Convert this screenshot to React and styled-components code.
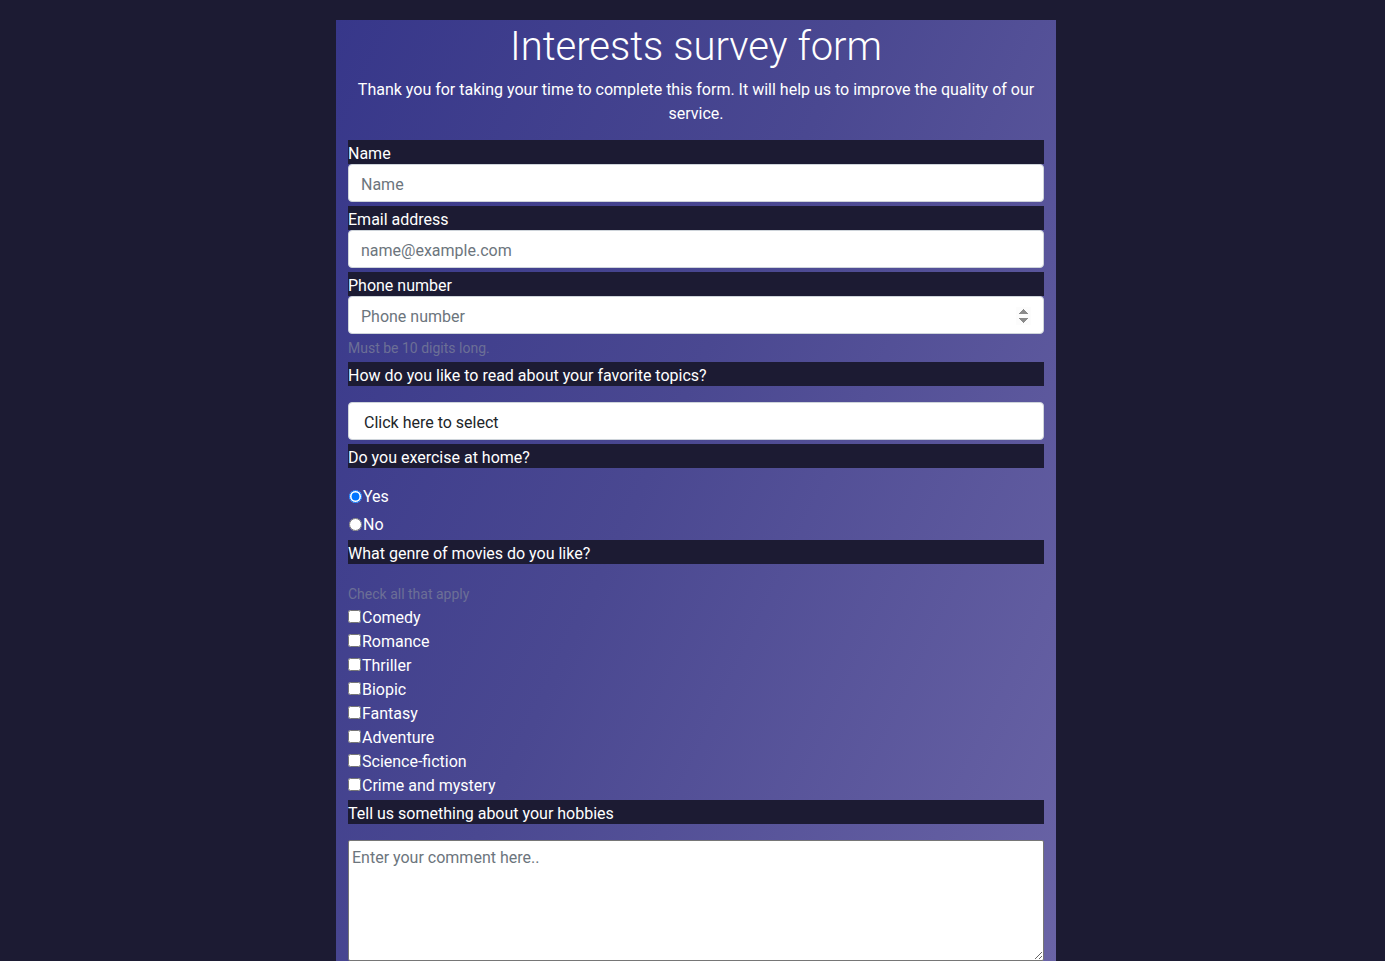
import React from 'react';
import styled, { createGlobalStyle } from 'styled-components';

const genres = ['Comedy', 'Romance', 'Thriller', 'Biopic', 'Fantasy', 'Adventure', 'Science-fiction', 'Crime and mystery'];

export default function App() {
  return (
    <>
      <GlobalStyle />
      <Survey>
        <Title>Interests survey form</Title>
        <Intro>Thank you for taking your time to complete this form. It will help us to improve the quality of our service.</Intro>

        <form onSubmit={(e) => e.preventDefault()}>
          <Label htmlFor="name">Name</Label>
          <TextInput id="name" type="text" placeholder="Name" />

          <Label htmlFor="email">Email address</Label>
          <TextInput id="email" type="email" placeholder="name@example.com" />

          <Label htmlFor="number">Phone number</Label>
          <TextInput id="number" type="number" placeholder="Phone number" />
          <Hint>Must be 10 digits long.</Hint>

          <Label htmlFor="dropdown">How do you like to read about your favorite topics?</Label>
          <Picker id="dropdown" defaultValue="">
            <option value="">Click here to select</option>
            <option value="books">Books</option>
            <option value="magazines">Magazines</option>
            <option value="online">Online articles</option>
          </Picker>

          <Label as="div">Do you exercise at home?</Label>
          <RadioGroup>
            <Choice>
              <Radio type="radio" name="exercise" value="yes" defaultChecked />
              Yes
            </Choice>
            <Choice>
              <Radio type="radio" name="exercise" value="no" />
              No
            </Choice>
          </RadioGroup>

          <Label as="div">What genre of movies do you like?</Label>
          <CheckHint>Check all that apply</CheckHint>
          <CheckList>
            {genres.map((g) => (
              <CheckRow key={g}>
                <Check type="checkbox" value={g} />
                {g}
              </CheckRow>
            ))}
          </CheckList>

          <Label htmlFor="comments" $gap>Tell us something about your hobbies</Label>
          <Comments id="comments" placeholder="Enter your comment here.." />
        </form>
      </Survey>
    </>
  );
}

const GlobalStyle = createGlobalStyle`
  * { box-sizing: border-box; }
  body {
    margin: 0;
    padding-left: 7px;
    background: #1c1b33;
    font-family: Roboto, "Noto Sans", sans-serif;
    color: #fff;
  }
`;

const Survey = styled.main`
  width: 720px;
  margin: 20px auto 0;
  padding: 0 12px 12px;
  background: linear-gradient(115deg, #37378a 0%, #4a4891 45%, #6a64a6 100%);
`;

const Title = styled.h1`
  margin: 0;
  padding: 3px 0 7px;
  font-size: 40px;
  font-weight: 300;
  line-height: 48px;
  text-align: center;
`;

const Intro = styled.p`
  margin: 0 0 14px;
  font-size: 16px;
  line-height: 24px;
  text-align: center;
`;

const Label = styled.label`
  display: block;
  height: 24px;
  margin-top: ${({ $gap }) => ($gap ? '3px' : '0')};
  background: #1c1b33;
  font-size: 16px;
  line-height: 28px;
  color: #fff;
`;

const TextInput = styled.input`
  display: block;
  width: 100%;
  height: 38px;
  margin: 0 0 4px;
  padding: 7px 12px 5px;
  border: 1px solid #ced4da;
  border-radius: 4px;
  background: #fff;
  font-family: inherit;
  font-size: 16px;
  color: #212529;

  &::placeholder { color: #6c757d; }
  &::-webkit-inner-spin-button { opacity: 1; }
`;

const Hint = styled.small`
  display: block;
  margin: -1px 0 3px;
  font-size: 14px;
  line-height: 22px;
  color: #6c6f96;
`;

const Picker = styled.select`
  display: block;
  width: 100%;
  height: 38px;
  margin: 16px 0 4px;
  padding: 7px 15px 5px;
  border: 1px solid #ced4da;
  border-radius: 4px;
  background: #fff;
  appearance: none;
  font-family: inherit;
  font-size: 16px;
  color: #212529;
`;

const RadioGroup = styled.div`
  display: flex;
  flex-direction: column;
  gap: 4px;
  padding: 16px 0 4px;
`;

const Choice = styled.label`
  display: flex;
  align-items: center;
  height: 24px;
  padding-top: 2px;
  font-size: 16px;
  line-height: 24px;
`;

const Radio = styled.input`
  width: 13px;
  height: 13px;
  margin: 0 1px 2px 1px;
`;

const CheckHint = styled.small`
  display: block;
  margin-top: 20px;
  font-size: 14px;
  line-height: 21px;
  color: #6c6f96;
`;

const CheckList = styled.div`
  display: flex;
  flex-direction: column;
`;

const CheckRow = styled.label`
  display: flex;
  align-items: center;
  height: 24px;
  font-size: 16px;
`;

const Check = styled.input`
  width: 13px;
  height: 13px;
  margin: 0 1px 2px 0;
`;

const Comments = styled.textarea`
  display: block;
  width: 100%;
  height: 121px;
  margin-top: 16px;
  padding: 7px 3px;
  border: 1px solid #767676;
  border-radius: 2px;
  font-family: inherit;
  font-size: 16px;
  color: #212529;

  &::placeholder { color: #6c757d; }
`;
